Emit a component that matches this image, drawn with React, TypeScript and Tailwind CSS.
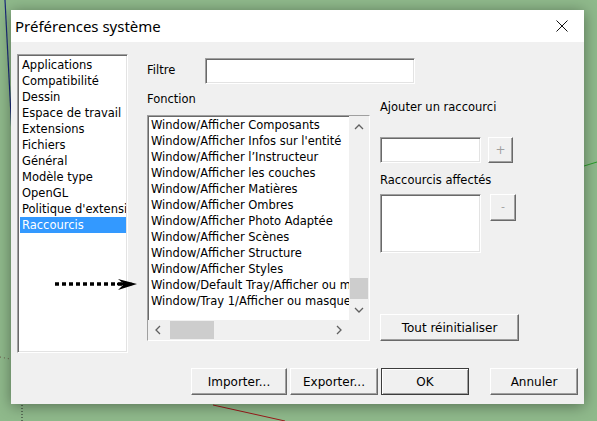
import React from "react";

const ui = { fontFamily: '"DejaVu Sans", Verdana, sans-serif' };

const sunken =
  "border border-t-[#a0a0a0] border-l-[#a0a0a0] border-r-white border-b-white shadow-[inset_1px_1px_0_#696969,inset_-1px_-1px_0_#e3e3e3]";
const raised =
  "border border-t-white border-l-white border-r-[#696969] border-b-[#696969] shadow-[inset_-1px_-1px_0_#a0a0a0] bg-[#f0f0f0]";

const categories = [
  "Applications",
  "Compatibilité",
  "Dessin",
  "Espace de travail",
  "Extensions",
  "Fichiers",
  "Général",
  "Modèle type",
  "OpenGL",
  "Politique d'extension",
  "Raccourcis",
];

const functions = [
  "Window/Afficher Composants",
  "Window/Afficher Infos sur l'entité",
  "Window/Afficher l’Instructeur",
  "Window/Afficher les couches",
  "Window/Afficher Matières",
  "Window/Afficher Ombres",
  "Window/Afficher Photo Adaptée",
  "Window/Afficher Scènes",
  "Window/Afficher Structure",
  "Window/Afficher Styles",
  "Window/Default Tray/Afficher ou masquer",
  "Window/Tray 1/Afficher ou masquer",
];

function Chevron({ dir }: { dir: "up" | "down" | "left" | "right" }) {
  const d = {
    up: "M1 6 L5 2 L9 6",
    down: "M1 2 L5 6 L9 2",
    left: "M6 1 L2 5 L6 9",
    right: "M2 1 L6 5 L2 9",
  }[dir];
  const horiz = dir === "left" || dir === "right";
  return (
    <svg width={horiz ? 8 : 10} height={horiz ? 10 : 8} viewBox={horiz ? "0 0 8 10" : "0 0 10 8"}>
      <path d={d} fill="none" stroke="#606060" strokeWidth="1.3" />
    </svg>
  );
}

function Button({ label, w, def }: { label: string; w: string; def?: boolean }) {
  return (
    <div
      className={`${w} h-[27px] flex items-center justify-center text-[12px] text-black ${
        def
          ? "border border-[#3c3c3c] bg-[#f0f0f0] shadow-[inset_1px_1px_0_#fff,inset_-1px_-1px_0_#a0a0a0]"
          : raised
      }`}
    >
      {label}
    </div>
  );
}

export default function App() {
  return (
    <div className="relative w-[597px] h-[421px] overflow-hidden bg-[#8fb98b]" style={ui}>
      <svg className="absolute inset-0 pointer-events-none" width="597" height="421">
        <line x1="5" y1="0" x2="12" y2="135" stroke="#1a2a7a" strokeWidth="1.2" />
        <line x1="584" y1="166" x2="597" y2="162" stroke="#2a9a2a" strokeWidth="1" />
        <line x1="213" y1="405" x2="285" y2="421" stroke="#9a1a1a" strokeWidth="1" />
        <line x1="22" y1="405" x2="22" y2="421" stroke="#222" strokeWidth="1" strokeDasharray="1 2" />
        <line x1="0" y1="357" x2="10" y2="359" stroke="#6a5a4a" strokeWidth="1" strokeDasharray="1 3" />
      </svg>

      <div className="relative ml-[11px] mt-[10px] w-[573px] h-[394px] bg-[#f0f0f0] shadow-[0_2px_14px_rgba(0,0,0,0.4)] flex flex-col">
        <div
          className="h-[32px] bg-white flex items-center justify-between pl-[4px] pr-[16px]"
          style={{ fontFamily: '"Noto Sans", "Open Sans", sans-serif' }}
        >
          <span className="text-[15px] text-black">Préférences système</span>
          <svg width="12" height="12" viewBox="0 0 12 12">
            <path d="M0.5 0.5 L11.5 11.5 M11.5 0.5 L0.5 11.5" stroke="#111" strokeWidth="1" />
          </svg>
        </div>

        <div className="flex flex-col pt-[12px] pl-[6px] pr-[6px] pb-[9px] text-[11.5px] text-black">
          <div className="flex h-[299px]">
            {/* categories */}
            <div className={`w-[111px] h-[299px] shrink-0 bg-white ${sunken} pt-[2px] pl-[2px] pr-[1px] overflow-hidden`}>
              {categories.map((c) => (
                <div
                  key={c}
                  className={`h-[16px] leading-[16px] pl-[2px] whitespace-nowrap overflow-hidden ${
                    c === "Raccourcis" ? "bg-[#3399ff] text-white" : ""
                  }`}
                >
                  {c}
                </div>
              ))}
            </div>

            {/* middle */}
            <div className="ml-[19px] w-[223px] shrink-0 flex flex-col pt-[4px]">
              <div className="flex items-center h-[26px]">
                <span className="w-[58px] shrink-0">Filtre</span>
                <div className={`w-[210px] h-[26px] shrink-0 bg-white ${sunken}`} />
              </div>
              <div className="mt-[7px] h-[16px] leading-[16px]">Fonction</div>
              <div className={`mt-[8px] w-[223px] h-[226px] bg-white ${sunken} flex flex-col`}>
                <div className="flex flex-1 min-h-0">
                  <div className="flex-1 pt-[1px] pl-[3px] overflow-hidden">
                    {functions.map((f) => (
                      <div key={f} className="h-[16px] leading-[16px] whitespace-nowrap">
                        {f}
                      </div>
                    ))}
                  </div>
                  <div className="w-[20px] bg-[#f0f0f0] flex flex-col items-center">
                    <div className="h-[18px] flex items-center justify-center mt-[2px]">
                      <Chevron dir="up" />
                    </div>
                    <div className="flex-1 w-full flex flex-col justify-end">
                      <div className="h-[21px] mx-[1px] bg-[#cdcdcd] mb-[2px]" />
                    </div>
                    <div className="h-[18px] flex items-center justify-center mb-[1px]">
                      <Chevron dir="down" />
                    </div>
                  </div>
                </div>
                <div className="h-[20px] flex bg-[#f0f0f0]">
                  <div className="flex-1 flex items-center">
                    <div className="w-[20px] flex justify-center">
                      <Chevron dir="left" />
                    </div>
                    <div className="w-[44px] h-[18px] bg-[#cdcdcd] ml-[2px]" />
                    <div className="flex-1" />
                    <div className="w-[20px] flex justify-center">
                      <Chevron dir="right" />
                    </div>
                  </div>
                  <div className="w-[20px]" />
                </div>
              </div>
            </div>

            {/* right */}
            <div className="ml-[10px] flex flex-col pt-[45px]">
              <div className="h-[16px] leading-[16px]">Ajouter un raccourci</div>
              <div className="mt-[22px] flex">
                <div className={`w-[101px] h-[26px] bg-white ${sunken}`} />
                <div className={`ml-[7px] w-[25px] h-[26px] ${raised} flex items-center justify-center text-[#a0a0a0] text-[12px]`}>
                  +
                </div>
              </div>
              <div className="mt-[9px] h-[16px] leading-[16px]">Raccourcis affectés</div>
              <div className="mt-[6px] flex items-start">
                <div className={`w-[101px] h-[59px] bg-white ${sunken}`} />
                <div className={`ml-[9px] w-[26px] h-[27px] ${raised} flex items-center justify-center text-[#a0a0a0] text-[11px]`}>
                  -
                </div>
              </div>
              <div className="mt-[61px]">
                <Button label="Tout réinitialiser" w="w-[139px]" />
              </div>
            </div>
          </div>

          <div className="mt-[15px] flex justify-end items-center">
            <Button label="Importer..." w="w-[96px]" />
            <div className="ml-[3px]">
              <Button label="Exporter..." w="w-[88px]" />
            </div>
            <div className="ml-[3px]">
              <Button label="OK" w="w-[88px]" def />
            </div>
            <div className="ml-[21px]">
              <Button label="Annuler" w="w-[88px]" />
            </div>
          </div>
        </div>
      </div>

      {/* annotation arrow */}
      <svg className="absolute left-0 top-0 pointer-events-none" width="597" height="421">
        <line x1="55" y1="284" x2="124" y2="284" stroke="#000" strokeWidth="3.5" strokeDasharray="4 3" />
        <path d="M118 279 L137 284 L118 290 L124 284 Z" fill="#000" />
        <line x1="117" y1="284" x2="132" y2="284" stroke="#000" strokeWidth="2.5" />
      </svg>
    </div>
  );
}
